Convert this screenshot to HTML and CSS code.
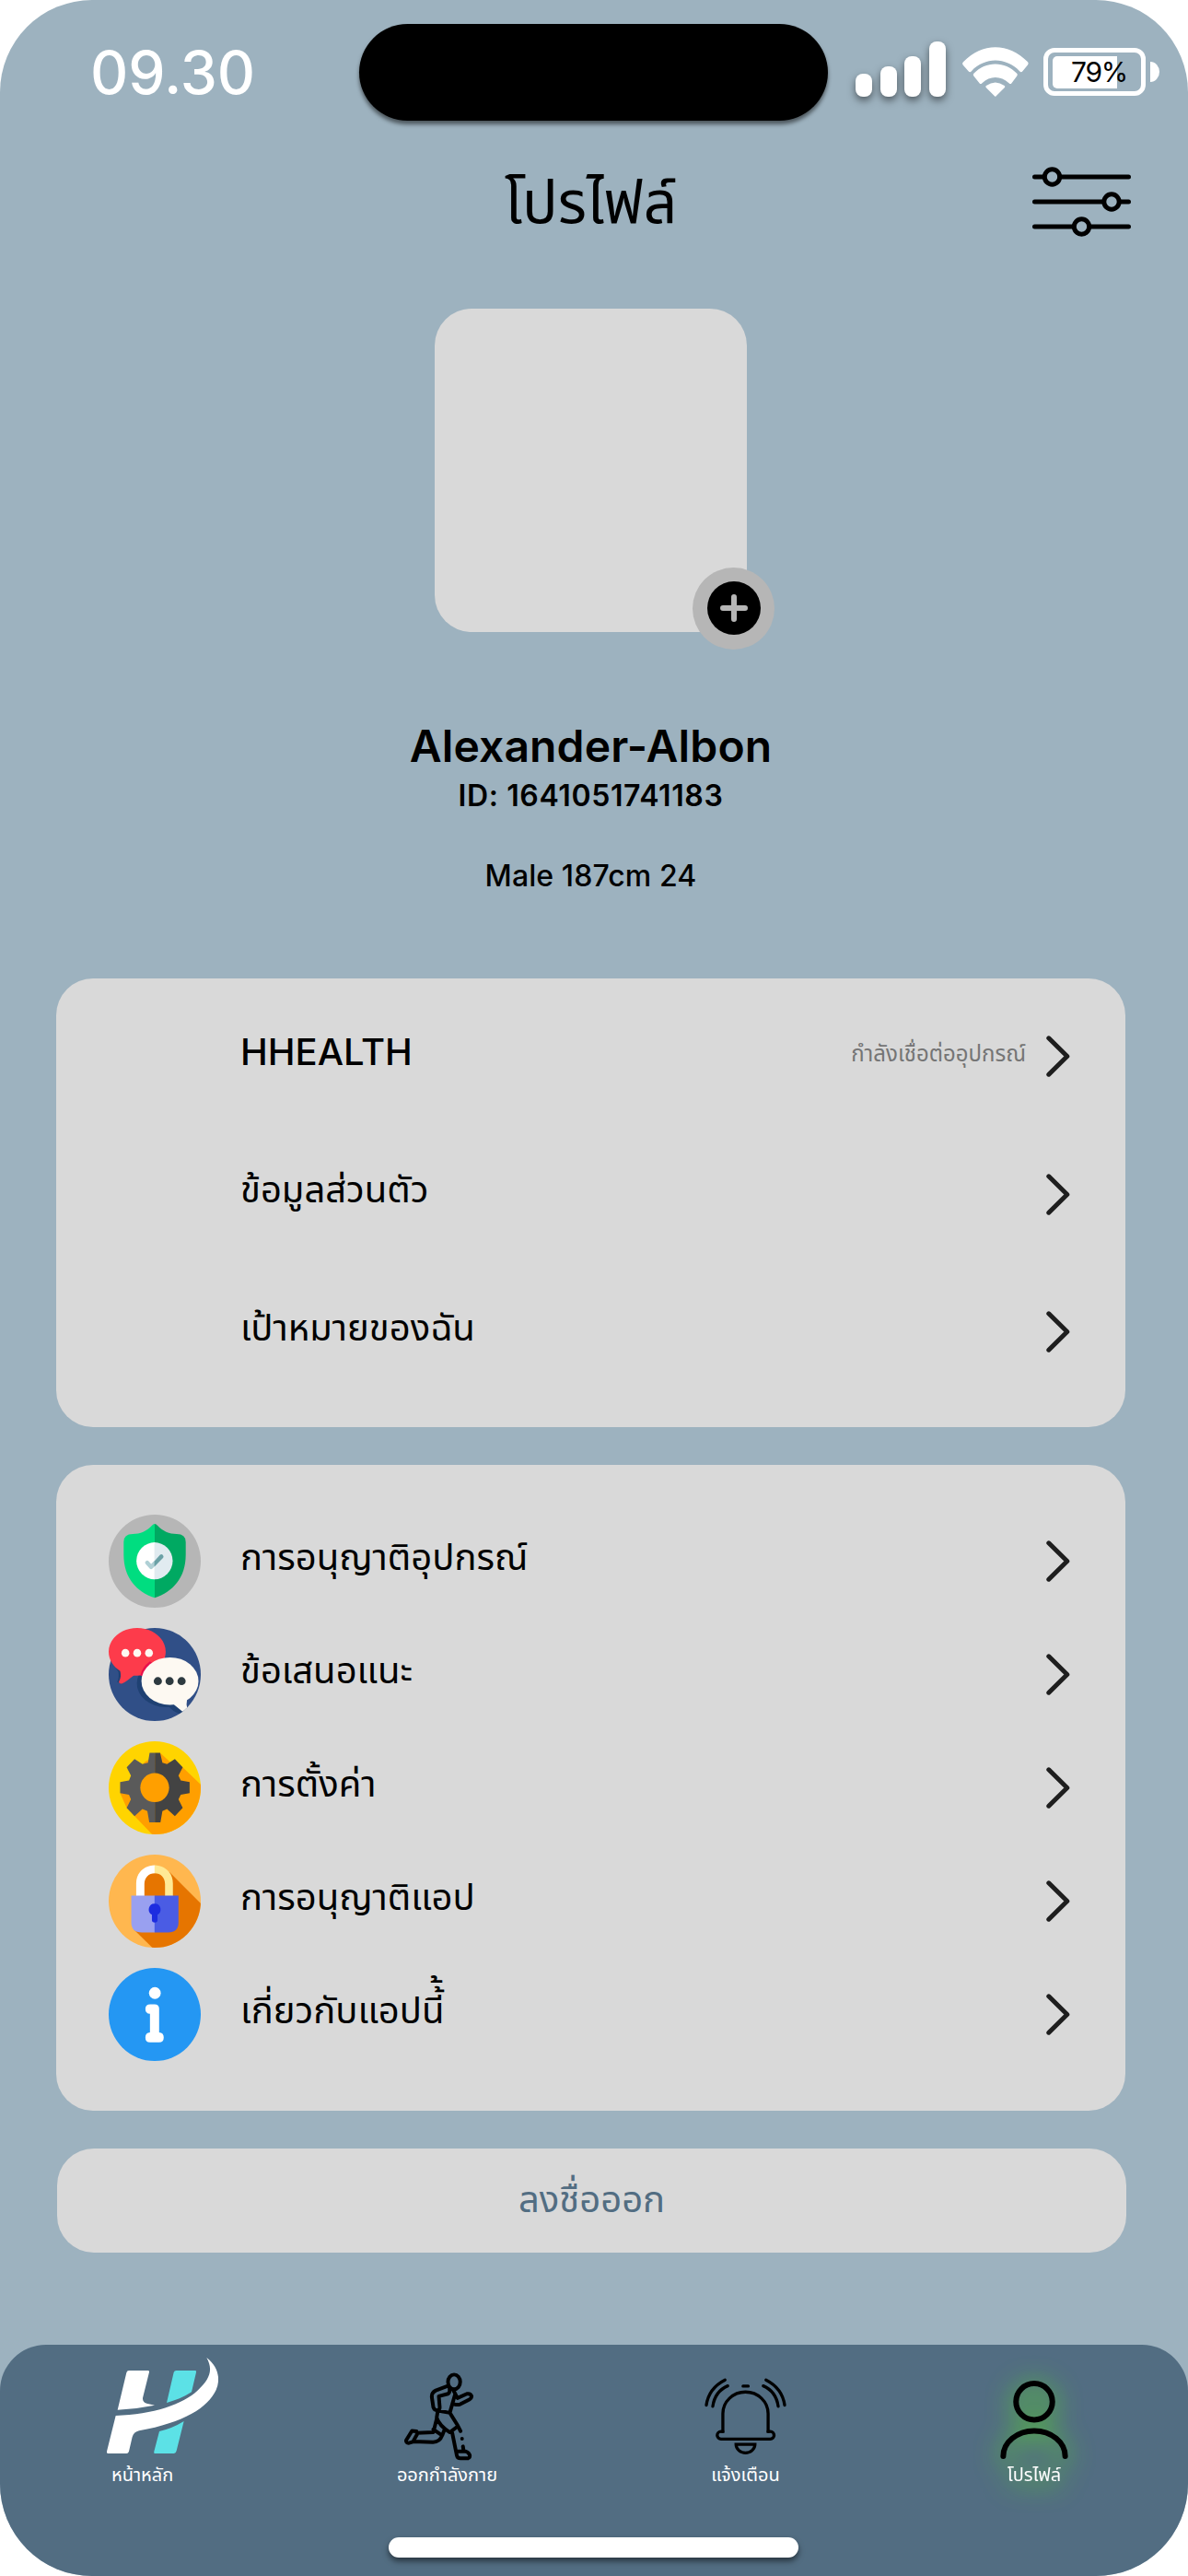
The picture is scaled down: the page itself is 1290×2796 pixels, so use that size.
FILE: index.html
```html
<!DOCTYPE html>
<html lang="th">
<head>
<meta charset="utf-8">
<title>โปรไฟล์</title>
<link rel="stylesheet" href="styles.css">
</head>
<body>
<svg class="defs" width="0" height="0">
  <symbol id="chevron" viewBox="0 0 26 45"><path d="M2.8 2.8L22.8 22.500L2.8 42.2" fill="none" stroke="#1e1e1e" stroke-width="5" stroke-linecap="round" stroke-linejoin="round"/></symbol>
</svg>
<div class="screen">
  <header class="status">
    <time class="clock">09.30</time>
    <div class="island"></div>
    <div class="signal"><i class="bar b1"></i><i class="bar b2"></i><i class="bar b3"></i><i class="bar b4"></i></div>
    <svg class="wifi" viewBox="977 152 175 161" preserveAspectRatio="none" fill="#fff">
      <path d="M980 200C1028 137 1100 137 1149 200Q1153 205 1149 211L1136 230Q1132 236 1128 230C1091 184 1037 184 1001 230Q997 236 993 230L979 211Q975 205 980 200Z"/>
      <path d="M1007 238C1039 197 1089 197 1121 238Q1124 242 1121 246L1107 269Q1104 274 1100 269C1078 244 1050 244 1029 269Q1025 274 1022 269L1007 246Q1004 242 1007 238Z"/>
      <path d="M1040 277Q1064 256 1088 277Q1091 280 1088 284L1066 311Q1064 314 1062 311L1040 284Q1037 280 1040 277Z"/>
    </svg>
    <div class="battery"><div class="shell"><div class="charge" style="width:70px"></div><span class="percent">79%</span></div><i class="tip"></i></div>
  </header>

  <div class="titlebar">
    <h1 class="title">โปรไฟล์</h1>
    <svg class="sliders" viewBox="0 0 107 76" fill="none" stroke="#000" stroke-width="5" stroke-linecap="round">
      <path d="M2.5 11H12M30 11H104.5M2.5 38H77M95 38H104.5M2.5 65H44M62 65H104.5"/>
      <circle cx="21.5" cy="11" r="8.2"/><circle cx="86" cy="38" r="8.2"/><circle cx="53.5" cy="65" r="8.2"/>
    </svg>
  </div>

  <section class="profile">
    <div class="avatar">
      <div class="add"><svg width="58" height="58" viewBox="0 0 58 58"><circle cx="29" cy="29" r="29"/><path d="M29 17V41M17 29H41" stroke="#b6b6b6" stroke-width="6" stroke-linecap="round"/></svg></div>
    </div>
    <h2 class="name">Alexander-Albon</h2>
    <p class="uid">ID: 1641051741183</p>
    <p class="bio">Male 187cm 24</p>
  </section>

  <main class="cards">
    <ul class="card card-main">
      <li class="row"><span class="label latin">HHEALTH</span><span class="note">กำลังเชื่อต่ออุปกรณ์</span><svg class="chev"><use href="#chevron"/></svg></li>
      <li class="row"><span class="label">ข้อมูลส่วนตัว</span><svg class="chev"><use href="#chevron"/></svg></li>
      <li class="row"><span class="label">เป้าหมายของฉัน</span><svg class="chev"><use href="#chevron"/></svg></li>
    </ul>

    <ul class="card card-more">
      <li class="row">
        <svg class="icon" viewBox="190 195 282 302" preserveAspectRatio="none">
          <ellipse cx="331" cy="346" rx="141" ry="151" fill="#b6b6b6"/>
          <path d="M331 225Q327 225 322 231C308 248 286 258 264 258Q236 258 236 284V325C236 400 275 445 331 465Z" fill="#00dd80"/>
          <path d="M331 225Q335 225 340 231C354 248 376 258 398 258Q426 258 426 284V325C426 400 387 445 331 465Z" fill="#00a962"/>
          <path d="M331 285A56 60 0 0 0 331 405Z" fill="#fff"/><path d="M330 285A56 60 0 0 1 330 405Z" fill="#e1ebf0"/>
          <path d="M308 351L320 365L331 353" fill="none" stroke="#b0d0d5" stroke-width="13" stroke-linecap="round" stroke-linejoin="round"/>
          <path d="M330 346L347 326Q351 322 355 325Q360 330 357 335L330 364Z" fill="#6ba1a6"/>
        </svg>
        <span class="label">การอนุญาติอุปกรณ์</span><svg class="chev"><use href="#chevron"/></svg></li>
      <li class="row">
        <svg class="icon" viewBox="190 563 281 301" preserveAspectRatio="none">
          <clipPath id="disc"><ellipse cx="330.500" cy="713.500" rx="140.500" ry="150.500"/></clipPath>
          <ellipse cx="330.500" cy="713.500" rx="140.500" ry="150.500" fill="#304f87"/>
          <g clip-path="url(#disc)" fill="#1f4173"><path d="M196 668L220 705Q222 726 216 738L230 744V680Z"/><ellipse cx="364" cy="742" rx="88" ry="77"/><path d="M372 815Q385 833 405 840L420 835V790Z"/></g>
          <path d="M277 563C325 563 364 597 364 640C364 682 325 717 277 717H266C255 725 243 738 230 743Q219 744 222 735C227 725 228 715 225 702C204 689 190 666 190 640C190 597 229 563 277 563Z" fill="#fd3b4b"/>
          <path d="M287 717Q291 690 316 671L323 676L295 719Z" fill="#e8104c"/>
          <g clip-path="url(#disc)" fill="#fdf9f2"><ellipse cx="377" cy="735" rx="87" ry="77"/><path d="M386 808L417 835L430 825Q426 808 429 796L410 780Z"/></g>
          <g fill="#fdf9f2"><ellipse cx="241" cy="644" rx="12" ry="13"/><ellipse cx="277" cy="644" rx="12" ry="13"/><ellipse cx="313" cy="644" rx="12" ry="13"/></g>
          <g fill="#2d3a40"><ellipse cx="340" cy="735" rx="12.500" ry="13"/><ellipse cx="376" cy="735" rx="12.500" ry="13"/><ellipse cx="412.500" cy="735" rx="12.500" ry="13"/></g>
        </svg>
        <span class="label">ข้อเสนอแนะ</span><svg class="chev"><use href="#chevron"/></svg></li>
      <li class="row">
        <svg class="icon" viewBox="190 933 281 301" preserveAspectRatio="none">
          <clipPath id="disc2"><ellipse cx="330.500" cy="1083.500" rx="140.500" ry="150.500"/></clipPath>
          <g clip-path="url(#disc2)"><path d="M190 933H471V1234H190Z" fill="#ffd400"/><path d="M347 970L380 1002L416 1017L475 1077V1240H328L245 1148L225 1101L300 1000Z" fill="#ff9f00"/></g>
          <path d="M331 970H315L310 1002L293 1007L269 990L245 1017L258 1044L252 1060L225 1065V1101L252 1106L258 1121L245 1148L269 1175L293 1152L308 1159L314 1195H331Z" fill="#5a5a5a"/>
          <path d="M331 970H347L354 1002L368 1007L392 990L416 1017L403 1044L410 1060L437 1065V1101L410 1106L403 1121L416 1148L392 1175L368 1152L354 1159L348 1195H331Z" fill="#434343"/>
          <ellipse cx="330.500" cy="1083" rx="44" ry="47" fill="#ff9f00"/>
        </svg>
        <span class="label">การตั้งค่า</span><svg class="chev"><use href="#chevron"/></svg></li>
      <li class="row">
        <svg class="icon" viewBox="190 162 281 300" preserveAspectRatio="none">
          <clipPath id="disc3"><ellipse cx="330.500" cy="312" rx="140.500" ry="150"/></clipPath>
          <g clip-path="url(#disc3)"><path d="M190 162H471V462H190Z" fill="#ffb74f"/><path d="M377 220L475 324V470H331L268 405L287 250L330 209Z" fill="#e67500"/></g>
          <path d="M274 296V255C274 219 300 196 331 196V222C312 222 299 236 299 257V296Z" fill="#fff"/>
          <path d="M386 296V255C386 219 360 196 330 196V222C349 222 362 236 362 257V296Z" fill="#ffe995"/>
          <path d="M331 294H259V381Q259 413 291 413H331Z" fill="#99a0f0"/><path d="M330 294H403V381Q403 413 371 413H330Z" fill="#4a5ce4"/>
          <path d="M331 320A17 19 0 0 0 322 356V374Q322 381 331 381Q339 381 339 374V356A17 19 0 0 0 331 320Z" fill="#1c2ce0"/>
        </svg>
        <span class="label">การอนุญาติแอป</span><svg class="chev"><use href="#chevron"/></svg></li>
      <li class="row">
        <svg class="icon" viewBox="190 531 281 300" preserveAspectRatio="none">
          <ellipse cx="330.500" cy="681" rx="140.500" ry="150" fill="#2497f3"/>
          <ellipse cx="331" cy="612" rx="18" ry="19" fill="#fff"/>
          <path d="M317 648H330Q344 648 344 662V739Q358 740 358 755Q358 771 344 771H316Q302 771 302 755Q302 740 316 739V679Q302 678 302 663Q302 648 317 648Z" fill="#fff"/>
        </svg>
        <span class="label">เกี่ยวกับแอปนี้้</span><svg class="chev"><use href="#chevron"/></svg></li>
    </ul>

    <button class="logout">ลงชื่อออก</button>
  </main>

  <nav class="tabs">
    <div class="tablist">
    <a class="tab home">
      <svg width="121" height="104" viewBox="108 57 363 312">
        <path fill="#fff" d="M180 99H242Q247 99 246 104L225 188Q224 203 238 206L264 212Q205 224 143 227L172 106Q174 99 180 99ZM433 57C470 85 480 125 464 162C437 220 360 268 213 295Q196 299 191 315L180 362Q178 369 172 369H112Q107 369 108 362L137 246C260 242 355 210 405 163C442 128 456 98 433 57Z"/>
        <path fill="#5ce1e6" d="M334 99H396Q401 99 399 105L384 169C360 185 330 197 303 204L326 105Q328 99 334 99ZM359 264L335 360Q333 369 327 369H266Q260 369 262 362L279 297Q322 287 359 264Z"/>
      </svg><span class="tabname">หน้าหลัก</span></a>
    <a class="tab run">
      <svg width="75" height="96" viewBox="1078 107 226 287" fill="none" stroke="#000" stroke-width="12" stroke-linecap="round" stroke-linejoin="round">
        <ellipse cx="1241" cy="137" rx="20" ry="24"/>
        <path d="M1219 151L1181 165Q1167 172 1168 186L1173 220Q1177 231 1187 230Q1194 227 1194 220L1191 184L1221 176Q1228 172 1226 158M1238 163L1252 190L1283 176Q1295 174 1298 183Q1299 189 1292 194L1261 210Q1252 213 1242 210M1244 178L1227 238L1188 231M1187 236L1184 254Q1192 280 1227 302L1252 283M1227 238L1253 280L1262 298M1184 258L1173 302L1119 304M1173 292L1196 308M1118 299L1103 297L1084 328Q1083 336 1093 337L1106 333L1122 305M1108 332L1172 334Q1194 334 1202 312L1211 290M1235 304L1250 378Q1252 387 1262 387H1285Q1294 386 1292 376Q1288 367 1278 364H1252M1270 348L1272 362M1267 323V323.100"/>
      </svg><span class="tabname">ออกกำลังกาย</span></a>
    <a class="tab bell">
      <svg width="89" height="84" viewBox="136 127 268 251" fill="none" stroke="#000" stroke-width="10" stroke-linecap="round">
        <path stroke-linecap="butt" d="M196 306V243A74 71 0 0 1 344 243V306"/>
        <path d="M196 301H190A12 12 0 0 0 190 326H351A12 12 0 0 0 351 301H344M239 343H301A31 28 0 0 1 239 343ZM262 153H279M142 215Q150 160 203 133M163 219Q170 170 212 152M398 215Q390 160 337 133M377 219Q370 170 328 152"/>
      </svg><span class="tabname">แจ้งเตือน</span></a>
    <a class="tab me">
      <svg width="74" height="85" viewBox="1100 134 221 254" fill="none" stroke="#000" stroke-width="18" stroke-linecap="round">
        <circle cx="1210.500" cy="202" r="59"/><path d="M1110 379A100 82 0 0 1 1311 379"/>
      </svg><span class="tabname">โปรไฟล์</span></a>
    </div>
    <div class="homebar"></div>
  </nav>
</div>
</body>
</html>
```
FILE: styles.css
```css
* { box-sizing: border-box; margin: 0; padding: 0; }
body { background: #fff; font-family: "Inter", "Noto Sans Thai", "Noto Sans", sans-serif; color: #000; }
.defs { display: block; }
.screen { width: 1290px; height: 2796px; background: #9db2bf; border-radius: 100px; overflow: hidden; display: flex; flex-direction: column; }

.status { display: flex; height: 157px; padding-left: 98px; align-items: flex-start; }
.clock { width: 292px; padding-top: 40px; font-size: 64px; line-height: 78px; font-weight: 500; color: #fff; }
.island { width: 509px; height: 105px; margin-top: 26px; background: #000; border-radius: 53px; box-shadow: 0 4px 4px rgba(0,0,0,.5); }
.signal { display: flex; align-items: flex-end; justify-content: space-between; width: 98px; height: 60px; margin: 45px 18px 0 30px; filter: drop-shadow(0 4px 4px rgba(0,0,0,.5)); }
.bar { width: 18px; background: #fff; border-radius: 8px; }
.b1 { height: 25px; } .b2 { height: 33px; } .b3 { height: 44px; } .b4 { height: 60px; }
.wifi { width: 72px; height: 54px; margin-top: 51px; }
.battery { display: flex; align-items: center; gap: 5px; margin: 52px 0 0 16px; }
.shell { position: relative; width: 111px; height: 52px; border: 5px solid #fff; border-radius: 12px; padding: 4px 5px; }
.charge { height: 35px; background: #fff; border-radius: 5px 0 0 5px; }
.percent { position: absolute; left: 25px; top: 3px; font-size: 30px; line-height: 36px; letter-spacing: -1.3px; }
.tip { width: 10px; height: 22px; background: #fff; border-radius: 0 10px 10px 0 / 0 11px 11px 0; }

.titlebar { display: flex; justify-content: flex-end; align-items: center; height: 123px; padding-right: 62px; }
.title { flex: 1; padding-left: 548px; font-size: 64px; line-height: 77px; font-weight: 400; }
.sliders { width: 107px; height: 76px; }

.profile { display: flex; flex-direction: column; align-items: center; height: 782px; padding-top: 55px; padding-right: 7px; }
.avatar { position: relative; width: 339px; height: 351px; background: #d9d9d9; border-radius: 40px; }
.add { position: absolute; left: 280px; top: 281px; width: 89px; height: 89px; padding: 0 0 1px 1px; border-radius: 50%; background: #b6b6b6; display: flex; align-items: center; justify-content: center; }
.name { margin-top: 95px; font-size: 48px; line-height: 58px; font-weight: 600; letter-spacing: .15px; }
.uid { margin-top: 5px; font-size: 32px; line-height: 39px; font-weight: 600; letter-spacing: .6px; }
.bio { margin-top: 48px; font-size: 32px; line-height: 39px; font-weight: 500; letter-spacing: .1px; }

.cards { display: flex; flex-direction: column; padding: 0 68px 0 61px; }
.card { background: #d9d9d9; border-radius: 40px; list-style: none; padding: 0 60px 0 57px; }
.card-main { height: 487px; padding-top: 10px; margin-bottom: 41px; }
.card-main .row { height: 149.500px; padding-left: 143px; }
.card-more { height: 701px; padding-top: 43px; margin-bottom: 41px; }
.card-more .row { height: 123px; }
.row { display: flex; align-items: center; }
.icon { width: 100px; height: 101px; margin-right: 43px; }
.label { flex: 1; font-size: 40px; line-height: 48px; padding-bottom: 10px; }
.latin { font-weight: 500; }
.note { font-size: 24px; line-height: 29px; color: #757575; margin-right: 22px; padding-bottom: 7px; }
.chev { width: 26px; height: 45px; }
.logout { height: 113px; margin: 0 -1px 0 1px; border: 0; border-radius: 40px; background: #d9d9d9; color: #526d82; font: inherit; font-size: 40px; line-height: 48px; padding-bottom: 4px; }

.tabs { margin-top: auto; height: 251px; background: #526d82; border-radius: 50px 50px 0 0; display: flex; flex-direction: column; align-items: center; justify-content: space-between; padding-bottom: 20px; }
.tablist { display: flex; align-items: flex-end; width: 100%; height: 153px; padding-left: 116px; }
.tab { display: flex; flex-direction: column; align-items: center; color: #fff; }
.tabname { font-size: 20px; line-height: 24px; white-space: nowrap; }
.home { width: 121px; }
.home svg { margin-bottom: 11px; }
.home .tabname { align-self: flex-start; margin-left: 5px; }
.run { width: 109px; margin-left: 194px; }
.run svg { align-self: flex-start; margin: 0 0 3px 8px; }
.bell { width: 89px; margin-left: 225px; }
.bell svg { margin-bottom: 9px; }
.me { width: 74px; margin-left: 232px; filter: drop-shadow(0 4px 14px #56f010); }
.me svg { margin-bottom: 5px; }
.homebar { width: 445px; height: 22px; margin-right: 1px; background: #fff; border-radius: 11px; box-shadow: 0 4px 6px rgba(0,0,0,.5); }
```
